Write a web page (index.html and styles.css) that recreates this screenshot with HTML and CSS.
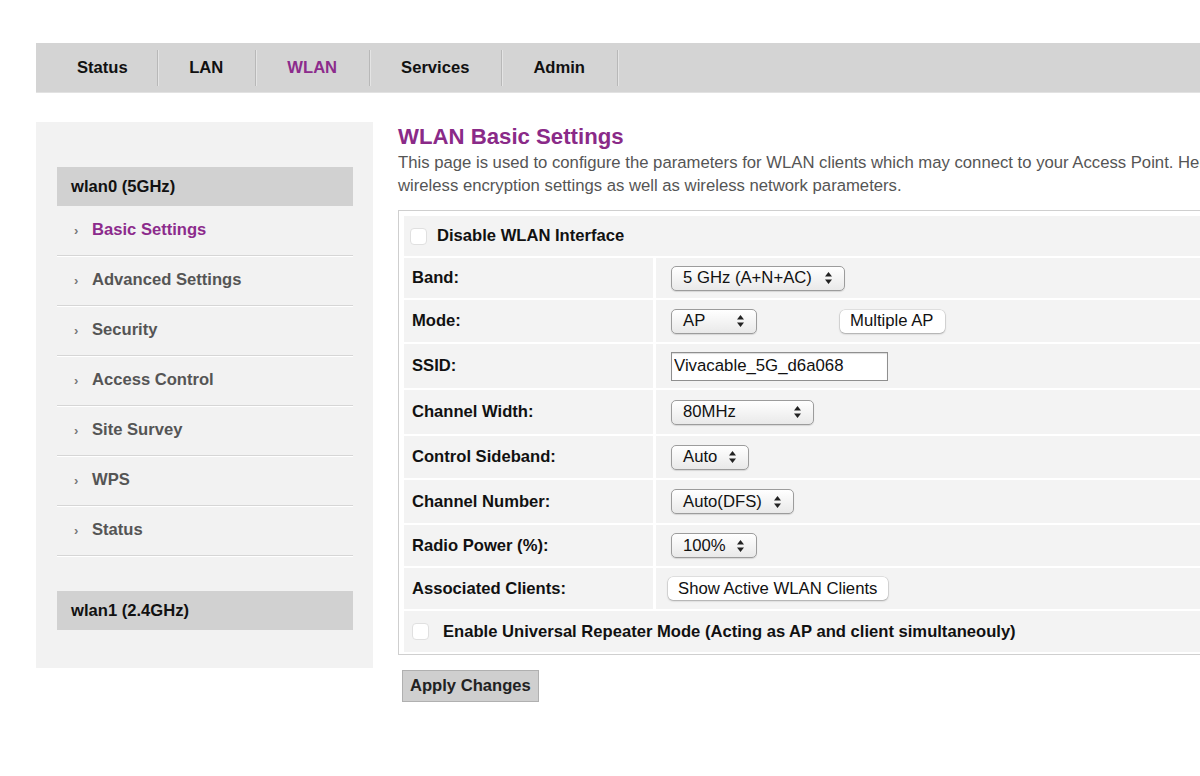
FILE: index.html
```html
<!DOCTYPE html>
<html lang="en">
  <head>
    <meta charset="UTF-8" />
    <title>WLAN Basic Settings</title>
    <link rel="stylesheet" href="styles.css">
  </head>
  <body>
    <div class="page">
      <nav class="topnav">
        <a href="#">Status</a>
        <a href="#">LAN</a>
        <a href="#" class="active">WLAN</a>
        <a href="#">Services</a>
        <a href="#">Admin</a>
      </nav>

      <div class="layout">
        <aside class="sidebar">
          <div class="side-head">wlan0 (5GHz)</div>
          <ul class="side-menu">
            <li class="current"><span class="bullet">&rsaquo;</span>Basic Settings</li>
            <li><span class="bullet">&rsaquo;</span>Advanced Settings</li>
            <li><span class="bullet">&rsaquo;</span>Security</li>
            <li><span class="bullet">&rsaquo;</span>Access Control</li>
            <li><span class="bullet">&rsaquo;</span>Site Survey</li>
            <li><span class="bullet">&rsaquo;</span>WPS</li>
            <li><span class="bullet">&rsaquo;</span>Status</li>
          </ul>
          <div class="side-head second">wlan1 (2.4GHz)</div>
        </aside>

        <main class="content">
          <h1>WLAN Basic Settings</h1>
          <p class="intro">
            This page is used to configure the parameters for WLAN clients which may connect to your Access Point. Here you may change<br>
            wireless encryption settings as well as wireless network parameters.
          </p>

          <div class="settings">
            <div class="row full h40">
              <div class="cell check">
                <span class="checkbox"></span>
                <label>Disable WLAN Interface</label>
              </div>
            </div>

            <div class="row h40">
              <div class="cell label">Band:</div>
              <div class="cell value">
                <span class="select w-band">5 GHz (A+N+AC)
                  <svg width="7" height="12" viewBox="0 0 7 12"><path d="M3.5 0 7 4.5H0zM3.5 12 0 7.5h7z" fill="#222"/></svg>
                </span>
              </div>
            </div>

            <div class="row h42">
              <div class="cell label">Mode:</div>
              <div class="cell value">
                <span class="select w-mode">AP
                  <svg width="7" height="12" viewBox="0 0 7 12"><path d="M3.5 0 7 4.5H0zM3.5 12 0 7.5h7z" fill="#222"/></svg>
                </span>
                <button class="btn multi">Multiple AP</button>
              </div>
            </div>

            <div class="row h44">
              <div class="cell label">SSID:</div>
              <div class="cell value">
                <input type="text" class="textbox" value="Vivacable_5G_d6a068" />
              </div>
            </div>

            <div class="row h44">
              <div class="cell label">Channel Width:</div>
              <div class="cell value">
                <span class="select w-width">80MHz
                  <svg width="7" height="12" viewBox="0 0 7 12"><path d="M3.5 0 7 4.5H0zM3.5 12 0 7.5h7z" fill="#222"/></svg>
                </span>
              </div>
            </div>

            <div class="row h42">
              <div class="cell label">Control Sideband:</div>
              <div class="cell value">
                <span class="select w-side">Auto
                  <svg width="7" height="12" viewBox="0 0 7 12"><path d="M3.5 0 7 4.5H0zM3.5 12 0 7.5h7z" fill="#222"/></svg>
                </span>
              </div>
            </div>

            <div class="row h43">
              <div class="cell label">Channel Number:</div>
              <div class="cell value">
                <span class="select w-chan">Auto(DFS)
                  <svg width="7" height="12" viewBox="0 0 7 12"><path d="M3.5 0 7 4.5H0zM3.5 12 0 7.5h7z" fill="#222"/></svg>
                </span>
              </div>
            </div>

            <div class="row h41">
              <div class="cell label">Radio Power (%):</div>
              <div class="cell value">
                <span class="select w-power">100%
                  <svg width="7" height="12" viewBox="0 0 7 12"><path d="M3.5 0 7 4.5H0zM3.5 12 0 7.5h7z" fill="#222"/></svg>
                </span>
              </div>
            </div>

            <div class="row h41">
              <div class="cell label">Associated Clients:</div>
              <div class="cell value">
                <button class="btn clients">Show Active WLAN Clients</button>
              </div>
            </div>

            <div class="row full h41">
              <div class="cell check repeater">
                <span class="checkbox"></span>
                <label>Enable Universal Repeater Mode (Acting as AP and client simultaneouly)</label>
              </div>
            </div>
          </div>

          <button class="apply">Apply Changes</button>
        </main>
      </div>
    </div>
  </body>
</html>
```

FILE: styles.css
```css
* {
  margin: 0;
  padding: 0;
  box-sizing: border-box;
}

body {
  font-family: "Liberation Sans", Arial, Helvetica, sans-serif;
  color: #111;
  background: #fff;
  overflow: hidden;
}

.page {
  width: 1480px;
  padding: 43px 0 0 36px;
}

/* top navigation */
.topnav {
  display: flex;
  align-items: center;
  height: 50px;
  background: #d4d4d4;
  border-bottom: 1px solid #e2e2e2;
  padding-left: 9.5px;
}

.topnav a {
  display: block;
  height: 36px;
  line-height: 36px;
  padding: 0 31.5px;
  font-size: 16.6px;
  font-weight: bold;
  color: #111;
  text-decoration: none;
  border-right: 1px solid #b8b8b8;
  box-shadow: 1px 0 0 #e4e4e4;
}

.topnav a:first-child {
  padding-right: 29px;
}

.topnav a.active {
  color: #8c2b8c;
}

.layout {
  display: flex;
  align-items: flex-start;
  gap: 25px;
  margin-top: 29px;
}

/* sidebar */
.sidebar {
  width: 337px;
  flex-shrink: 0;
  background: #f2f2f2;
  padding: 45px 20px 38px 21px;
}

.side-head {
  height: 39px;
  line-height: 39px;
  padding-left: 14px;
  background: #d1d1d1;
  font-size: 16.6px;
  font-weight: bold;
  color: #111;
}

.side-head.second {
  margin-top: 35px;
}

.side-menu {
  list-style: none;
}

.side-menu li {
  display: flex;
  align-items: center;
  height: 50px;
  padding-left: 17px;
  padding-bottom: 1px;
  border-bottom: 1px solid #d6d6d6;
  box-shadow: 0 1px 0 #fff;
  font-size: 16.6px;
  font-weight: bold;
  color: #555;
}

.side-menu li.current {
  color: #8c2b8c;
}

.bullet {
  width: 18px;
  font-size: 13px;
  color: #777;
  font-weight: bold;
}

/* content */
.content {
  width: 1040px;
  flex-shrink: 0;
}

h1 {
  font-size: 22.2px;
  line-height: 29px;
  color: #8a2a88;
}

.intro {
  font-size: 16.7px;
  line-height: 23px;
  color: #555;
}

.settings {
  margin-top: 13px;
  border: 1px solid #cfcfcf;
  padding: 5px 0 2px 5px;
  display: flex;
  flex-direction: column;
  gap: 2px;
  background: #fff;
}

.row {
  display: grid;
  grid-template-columns: 249px 1fr;
  gap: 3px;
}

.row.full {
  grid-template-columns: 1fr;
}

.h40 { height: 40px; }
.h41 { height: 41px; }
.h42 { height: 42px; }
.h43 { height: 43px; }
.h44 { height: 44px; }

.cell {
  background: #f3f3f3;
  display: flex;
  align-items: center;
}

.cell.label {
  padding-left: 8px;
  font-size: 16.6px;
  font-weight: bold;
  color: #111;
}

.cell.value {
  padding-left: 15px;
}

.cell.check {
  padding-left: 6px;
  font-size: 16.6px;
  font-weight: bold;
  gap: 10px;
}

.cell.repeater {
  padding-left: 8px;
  gap: 14px;
}

.checkbox {
  width: 17px;
  height: 17px;
  border-radius: 4px;
  background: #fff;
  border: 1px solid #e0e0e0;
}

.select {
  display: inline-flex;
  align-items: center;
  justify-content: space-between;
  height: 25px;
  padding: 0 12px 0 11px;
  border: 1px solid #9c9c9c;
  border-radius: 5px;
  background: linear-gradient(#ffffff, #e9e9e9);
  box-shadow: 0 1px 1px rgba(0, 0, 0, 0.12);
  font-size: 16.7px;
  color: #111;
}

.w-band { width: 174px; }
.w-mode { width: 86px; }
.w-width { width: 143px; }
.w-side { width: 78px; }
.w-chan { width: 123px; }
.w-power { width: 86px; }

.btn {
  height: 23px;
  padding: 0 10px;
  border: none;
  border-radius: 5px;
  background: #fff;
  box-shadow: 0 0 0 0.5px rgba(0, 0, 0, 0.15), 0 1px 2px rgba(0, 0, 0, 0.25);
  font-family: inherit;
  font-size: 16.7px;
  color: #111;
  text-align: left;
}

.btn.multi {
  margin-left: 83px;
  width: 105px;
}

.btn.clients {
  margin-left: -3px;
  width: 220px;
}

.textbox {
  width: 217px;
  height: 29px;
  padding: 0 2px;
  border: 1px solid #8f8f8f;
  box-shadow: inset 0 1px 1px rgba(0, 0, 0, 0.15);
  font-family: inherit;
  font-size: 16.8px;
  color: #111;
}

.apply {
  margin: 15px 0 0 4px;
  width: 137px;
  height: 32px;
  padding-left: 7px;
  text-align: left;
  background: #cfcfcf;
  border: 1px solid #b0b0b0;
  font-family: inherit;
  font-size: 16.6px;
  font-weight: bold;
  color: #222;
}
```
